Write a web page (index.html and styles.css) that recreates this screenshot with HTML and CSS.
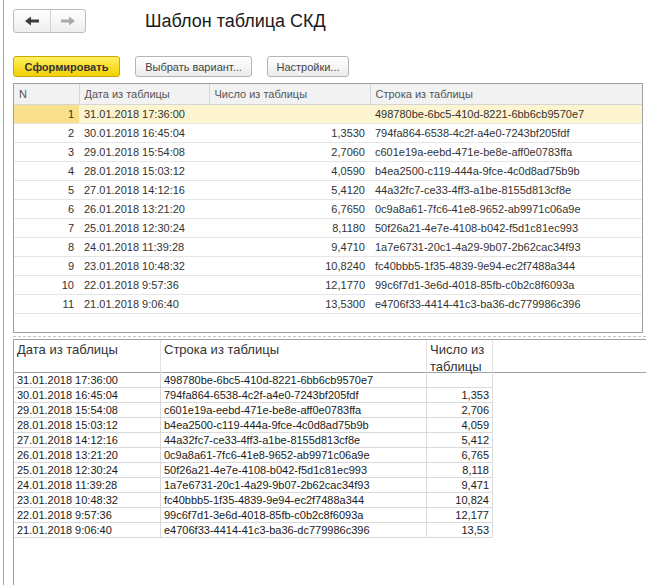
FILE: index.html
```html
<!DOCTYPE html>
<html lang="ru">
<head>
<meta charset="utf-8">
<title>Шаблон таблица СКД</title>
<link rel="stylesheet" href="styles.css">
</head>
<body>
<div class="window">
  <div class="top">
    <div class="nav">
      <span class="nav-btn back"><svg width="16" height="10" viewBox="0 0 16 10"><path d="M1 5 L7 0.5 V3.5 H15 V6.5 H7 V9.5 Z" fill="#3c3c3c"/></svg></span>
      <span class="nav-btn fwd"><svg width="16" height="10" viewBox="0 0 16 10"><path d="M15 5 L9 0.5 V3.5 H1 V6.5 H9 V9.5 Z" fill="#a9a9a9"/></svg></span>
    </div>
    <h1 class="title">Шаблон таблица СКД</h1>
  </div>
  <div class="toolbar">
    <span class="btn primary">Сформировать</span>
    <span class="btn w2">Выбрать вариант...</span>
    <span class="btn w3">Настройки...</span>
  </div>
  <div class="grid">
    <table class="gt">
      <colgroup><col class="c1"><col class="c2"><col class="c3"><col></colgroup>
      <thead>
        <tr><th>N</th><th>Дата из таблицы</th><th>Число из таблицы</th><th>Строка из таблицы</th></tr>
      </thead>
      <tbody>
        <tr class="sel"><td class="n">1</td><td>31.01.2018 17:36:00</td><td class="r"></td><td>498780be-6bc5-410d-8221-6bb6cb9570e7</td></tr>
        <tr><td class="n">2</td><td>30.01.2018 16:45:04</td><td class="r">1,3530</td><td>794fa864-6538-4c2f-a4e0-7243bf205fdf</td></tr>
        <tr><td class="n">3</td><td>29.01.2018 15:54:08</td><td class="r">2,7060</td><td>c601e19a-eebd-471e-be8e-aff0e0783ffa</td></tr>
        <tr><td class="n">4</td><td>28.01.2018 15:03:12</td><td class="r">4,0590</td><td>b4ea2500-c119-444a-9fce-4c0d8ad75b9b</td></tr>
        <tr><td class="n">5</td><td>27.01.2018 14:12:16</td><td class="r">5,4120</td><td>44a32fc7-ce33-4ff3-a1be-8155d813cf8e</td></tr>
        <tr><td class="n">6</td><td>26.01.2018 13:21:20</td><td class="r">6,7650</td><td>0c9a8a61-7fc6-41e8-9652-ab9971c06a9e</td></tr>
        <tr><td class="n">7</td><td>25.01.2018 12:30:24</td><td class="r">8,1180</td><td>50f26a21-4e7e-4108-b042-f5d1c81ec993</td></tr>
        <tr><td class="n">8</td><td>24.01.2018 11:39:28</td><td class="r">9,4710</td><td>1a7e6731-20c1-4a29-9b07-2b62cac34f93</td></tr>
        <tr><td class="n">9</td><td>23.01.2018 10:48:32</td><td class="r">10,8240</td><td>fc40bbb5-1f35-4839-9e94-ec2f7488a344</td></tr>
        <tr><td class="n">10</td><td>22.01.2018 9:57:36</td><td class="r">12,1770</td><td>99c6f7d1-3e6d-4018-85fb-c0b2c8f6093a</td></tr>
        <tr><td class="n">11</td><td>21.01.2018 9:06:40</td><td class="r">13,5300</td><td>e4706f33-4414-41c3-ba36-dc779986c396</td></tr>
      </tbody>
    </table>
  </div>
  <div class="splitter"></div>
  <div class="sheet">
    <div class="sheet-head">
      <div class="hc">Дата из таблицы</div>
      <div class="hc">Строка из таблицы</div>
      <div class="hc">Число из таблицы</div>
    </div>
    <div class="sheet-body">
      <div class="dc">31.01.2018 17:36:00</div><div class="dc">498780be-6bc5-410d-8221-6bb6cb9570e7</div><div class="dc r"></div>
      <div class="dc">30.01.2018 16:45:04</div><div class="dc">794fa864-6538-4c2f-a4e0-7243bf205fdf</div><div class="dc r">1,353</div>
      <div class="dc">29.01.2018 15:54:08</div><div class="dc">c601e19a-eebd-471e-be8e-aff0e0783ffa</div><div class="dc r">2,706</div>
      <div class="dc">28.01.2018 15:03:12</div><div class="dc">b4ea2500-c119-444a-9fce-4c0d8ad75b9b</div><div class="dc r">4,059</div>
      <div class="dc">27.01.2018 14:12:16</div><div class="dc">44a32fc7-ce33-4ff3-a1be-8155d813cf8e</div><div class="dc r">5,412</div>
      <div class="dc">26.01.2018 13:21:20</div><div class="dc">0c9a8a61-7fc6-41e8-9652-ab9971c06a9e</div><div class="dc r">6,765</div>
      <div class="dc">25.01.2018 12:30:24</div><div class="dc">50f26a21-4e7e-4108-b042-f5d1c81ec993</div><div class="dc r">8,118</div>
      <div class="dc">24.01.2018 11:39:28</div><div class="dc">1a7e6731-20c1-4a29-9b07-2b62cac34f93</div><div class="dc r">9,471</div>
      <div class="dc">23.01.2018 10:48:32</div><div class="dc">fc40bbb5-1f35-4839-9e94-ec2f7488a344</div><div class="dc r">10,824</div>
      <div class="dc">22.01.2018 9:57:36</div><div class="dc">99c6f7d1-3e6d-4018-85fb-c0b2c8f6093a</div><div class="dc r">12,177</div>
      <div class="dc">21.01.2018 9:06:40</div><div class="dc">e4706f33-4414-41c3-ba36-dc779986c396</div><div class="dc r">13,53</div>
    </div>
  </div>
</div>
</body>
</html>
```
FILE: styles.css
```css
* { box-sizing: border-box; }
html, body { margin: 0; padding: 0; background: #fff; overflow: hidden; }
body { font-family: "Liberation Sans", Arial, sans-serif; font-size: 11px; color: #333; }

.window {
  margin-left: 3px;
  border-left: 1px solid #a3a3a3;
  height: 585px;
  padding-left: 9px;
  display: flex;
  flex-direction: column;
}

.top {
  margin-top: 9px;
  height: 24px;
  display: flex;
  align-items: center;
}
.nav {
  display: flex;
  width: 73px;
  height: 24px;
  border: 1px solid #bdbdbd;
  border-radius: 3px;
  background: linear-gradient(#ffffff, #eeeeee);
}
.nav-btn {
  display: flex;
  align-items: center;
  justify-content: center;
  height: 100%;
}
.nav-btn.back { width: 37px; border-right: 1px solid #d2d2d2; }
.nav-btn.fwd { flex: 1; }
.nav-btn svg { display: block; }

.title {
  margin: 0 0 0 59px;
  font-size: 18px;
  font-weight: normal;
  color: #1a1a1a;
  line-height: 24px;
}

.toolbar {
  margin-top: 23px;
  height: 21px;
  display: flex;
  gap: 15px;
}
.btn {
  display: flex;
  align-items: center;
  justify-content: center;
  height: 21px;
  border: 1px solid #b5b5b5;
  border-radius: 3px;
  background: linear-gradient(#ffffff, #ececec);
  color: #444;
  font-size: 11px;
}
.btn.primary {
  width: 107px;
  border-color: #c9a800;
  background: linear-gradient(#fff060, #f2d000);
  font-weight: bold;
  color: #333;
}
.btn.w2 { width: 117px; }
.btn.w3 { width: 82px; }

.grid {
  margin-top: 6px;
  margin-right: 3px;
  height: 250px;
  border: 1px solid #a0a0a0;
  flex: none;
}
.gt {
  width: 100%;
  border-collapse: collapse;
  table-layout: fixed;
}
.gt col.c1 { width: 65px; }
.gt col.c2 { width: 130px; }
.gt col.c3 { width: 161px; }
.gt th {
  height: 20px;
  padding: 0 5px;
  background: #f2f2f2;
  border-bottom: 1px solid #d6d6d6;
  border-right: 1px solid #d6d6d6;
  text-align: left;
  font-weight: normal;
  color: #555;
  white-space: nowrap;
}
.gt th:last-child { border-right: none; }
.gt td {
  height: 19px;
  padding: 0 5px;
  border-bottom: 1px solid #e6e6e6;
  white-space: nowrap;
  overflow: hidden;
  color: #333;
}
.gt td.n, .gt td.r { text-align: right; }
.gt tr.sel td { background: #fdf5d0; }
.gt tr.sel td.n { background: #f9e08c; }

.splitter {
  margin-top: 3px;
  height: 0;
  border-top: 1px dashed #c4c4c4;
  flex: none;
}

.sheet {
  margin-top: 2px;
  flex: 1;
  border-top: 1px solid #a0a0a0;
  border-left: 1px solid #a0a0a0;
  color: #1a1a1a;
}
.sheet-head {
  display: grid;
  grid-template-columns: 147px 266px 66px;
  height: 33px;
  border-bottom: 1px solid #a0a0a0;
}
.hc {
  border-right: 1px solid #e2e2e2;
  padding: 1px 3px 0;
  font-size: 13px;
  line-height: 17px;
  color: #333;
}
.sheet-body {
  display: grid;
  grid-template-columns: 147px 266px 66px;
  grid-auto-rows: 15px;
}
.dc {
  border-right: 1px solid #dadada;
  border-bottom: 1px solid #dadada;
  padding: 0 3px;
  line-height: 14px;
  font-size: 11px;
  white-space: nowrap;
  overflow: hidden;
  color: #1a1a1a;
}
.dc.r { text-align: right; }
```
